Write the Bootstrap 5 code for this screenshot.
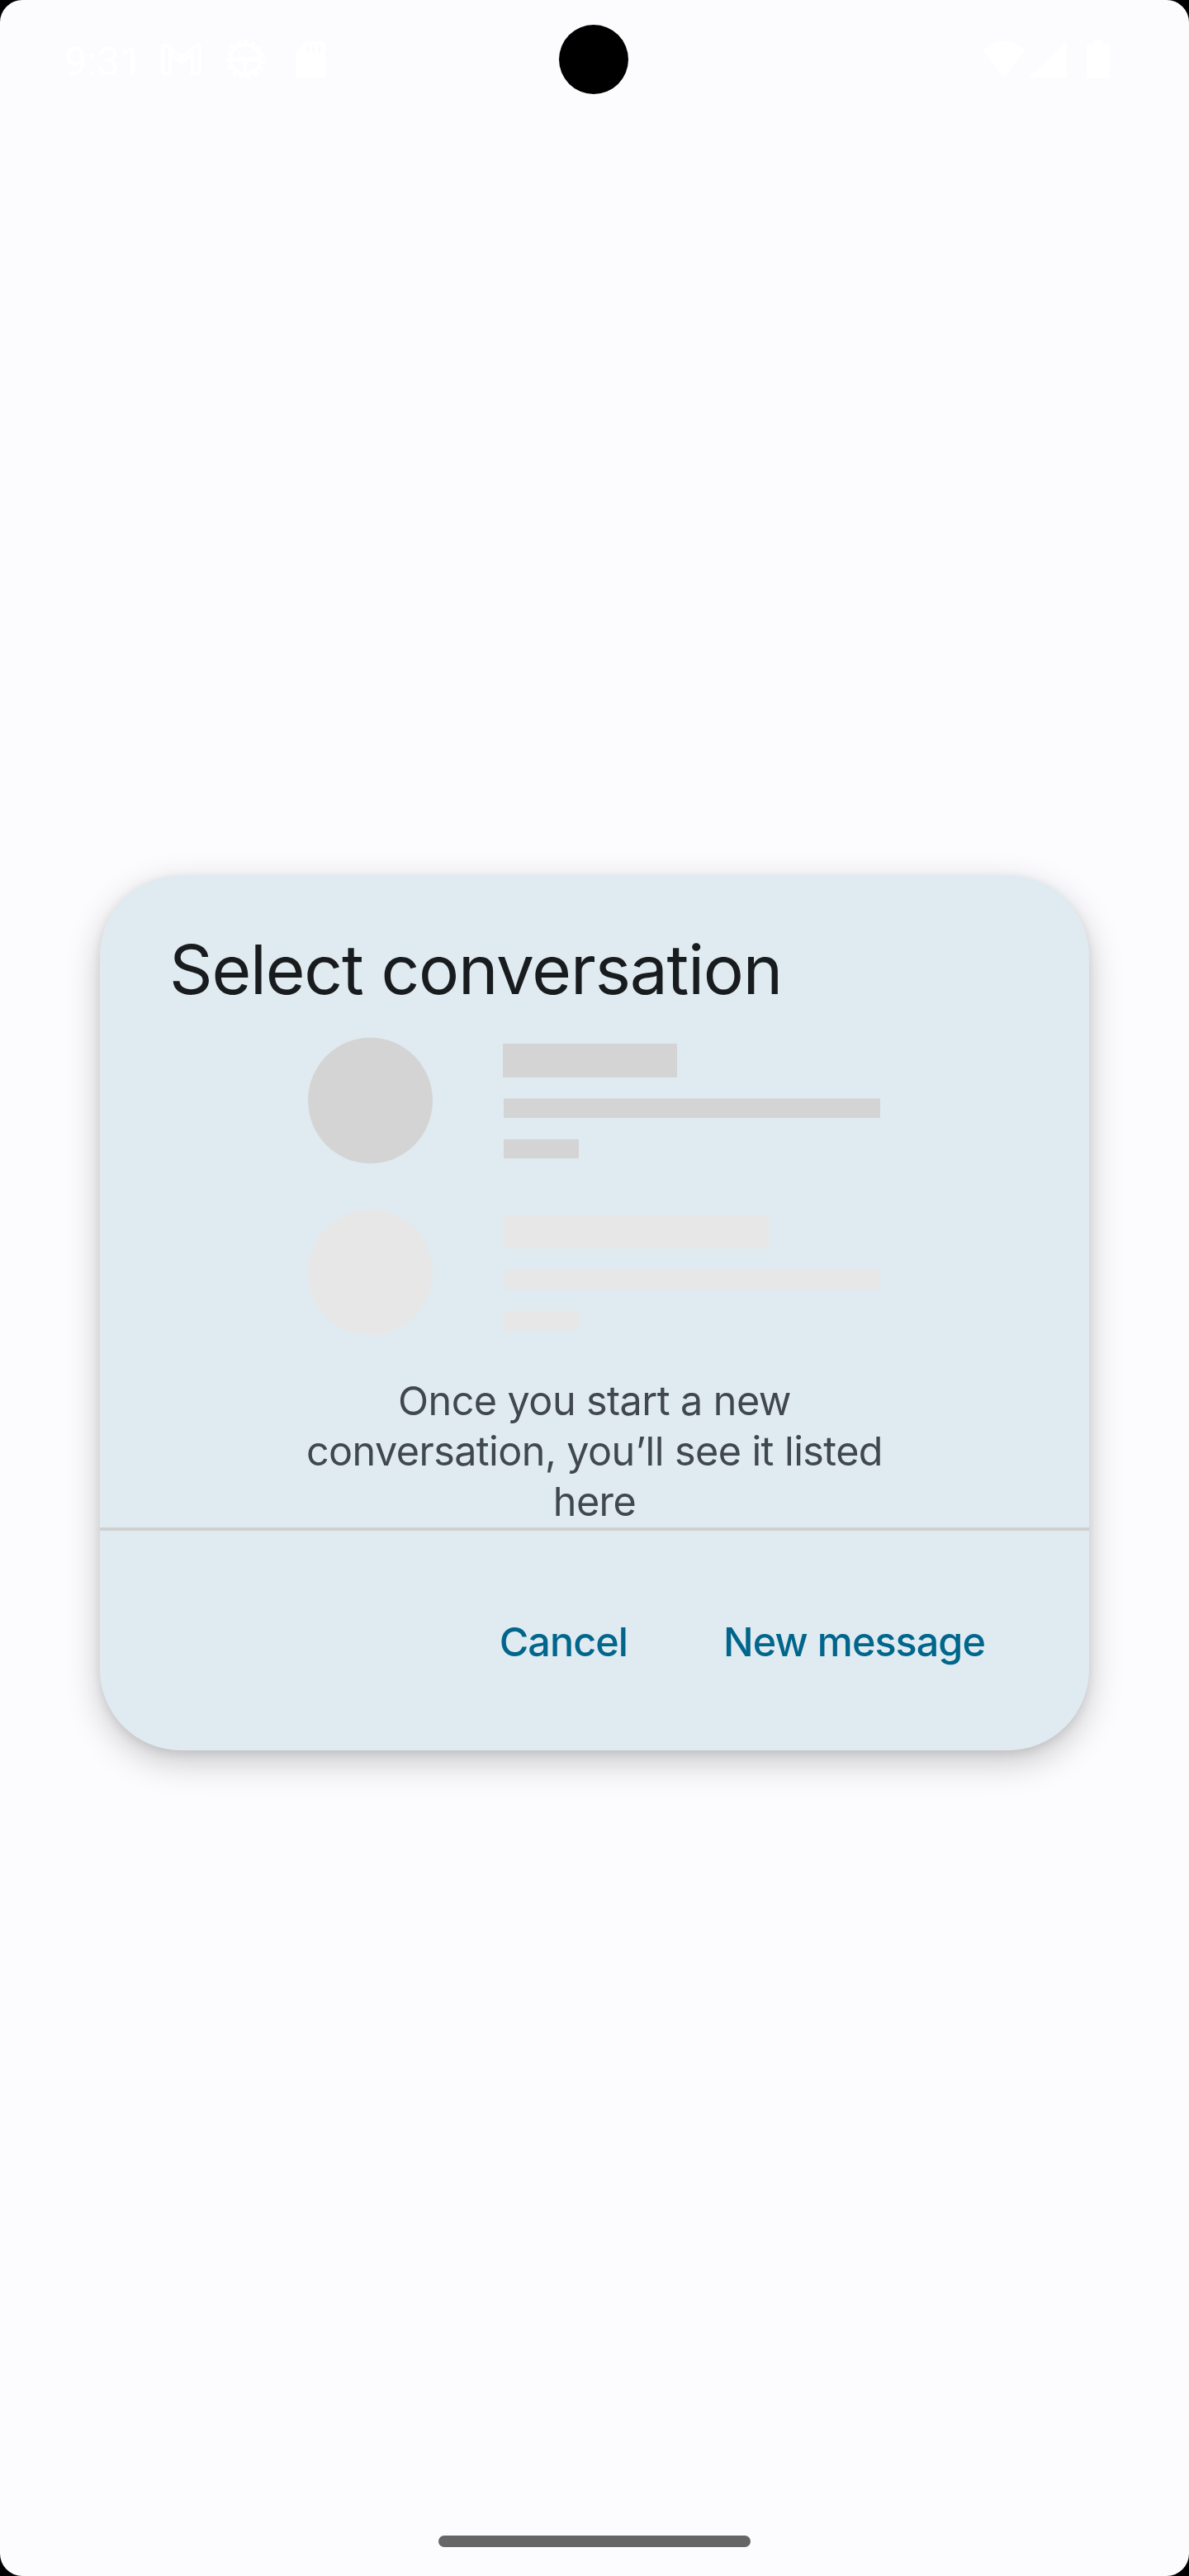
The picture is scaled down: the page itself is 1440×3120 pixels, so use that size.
<!DOCTYPE html>
<html lang="en">
<head>
<meta charset="utf-8">
<meta name="viewport" content="width=device-width, initial-scale=1">
<title>Select conversation</title>
<link rel="stylesheet" href="https://cdn.jsdelivr.net/npm/bootstrap@5.3.0/dist/css/bootstrap.min.css">
<style>
  body { background: #000; font-family: Inter, "Liberation Sans", sans-serif; }
  .screen { width: 1440px; height: 3120px; background: #fcfcff; border-radius: 27px; }
  .status-bar { height: 144px; padding: 0 96px 0 78px; color: #fff; }
  .status-bar svg { display: block; fill: currentColor; }
  .clock { font: 400 49px/58px Roboto, sans-serif; width: 117px; padding-top: 6px; }
  .camera { width: 84px; height: 84px; top: 30px; left: 677px; }
  .dialog-card { width: 1198px; height: 1060px; border-radius: 98px; background: #e0ebf1;
    box-shadow: 0 14px 42px rgba(0,0,0,.21), 0 4px 12px rgba(0,0,0,.09); }
  .dialog-title { font-size: 82px; line-height: 100px; font-weight: 400; letter-spacing: -1.2px; color: #191c1e; padding: 65px 84px 0 84px; }
  .empty-art { display: block; width: 700px; height: 364px; margin-top: 29px; }
  .empty-text { width: 720px; font-size: 48.5px; line-height: 61px; letter-spacing: -.57px; color: #40484d; margin-top: 48px; }
  .dialog-actions { border-top: 4px solid #d0d0d0; height: 270px; padding: 4px 84px 0 0; gap: 32px; }
  .text-action { font-size: 48.5px; line-height: 60px; letter-spacing: -.95px; font-weight: 500; color: #00668b; padding: 8px 42px; border: 0; }
  .gesture { height: 84px; padding-top: 35px; }
  .gesture-pill { width: 378px; height: 14px; background: #666; }
</style>
</head>
<body>
<div class="screen d-flex flex-column position-relative overflow-hidden mx-auto">
  <header class="status-bar d-flex align-items-center flex-shrink-0">
    <span class="clock">9:31</span>
    <svg width="49" height="38" viewBox="0 0 49 38"><path fill-rule="evenodd" d="M0 5C0 0 5-1 8 1L24.500 14 41 1C44-1 49 0 49 5V34Q49 38 45 38H36V16L24.500 25 13 16V38H4Q0 38 0 34ZM4 5V34H9V8L24.500 20 40 8V34H45V5Q44 3 42 5L24.500 18 7 5Q5 3 4 5Z"/></svg>
    <svg class="ms-4 me-4" width="58" height="52" viewBox="-29 -26 58 52"><circle r="18" fill="none" stroke="#fff" stroke-width="5"/><circle r="21.500" fill="none" stroke="#fff" stroke-width="5" stroke-dasharray="5 4.006"/><path d="M-17-2.500H17V2.500H2V17H-2V2.500H-17Z"/><circle cx="-7" cy="-8" r="1.500"/><circle cx="7" cy="-8" r="1.500"/></svg>
    <svg class="ms-2" width="36" height="44" viewBox="0 0 36 44"><path fill-rule="evenodd" d="M13 0H32Q36 0 36 4V40Q36 44 32 44H4Q0 44 0 40V13ZM13 5V14H17V5ZM20 5V14H24V5ZM27 5V14H31V5Z"/></svg>
    <div class="d-flex align-items-center ms-auto">
      <svg width="52" height="44" viewBox="0 0 52 44"><path d="M0 11Q26-11 52 11L26 44Z"/></svg>
      <svg class="ms-1" width="46" height="44" viewBox="0 0 46 44"><path d="M46 0V44H0Z"/></svg>
      <svg class="ms-4" width="28" height="46" viewBox="0 0 28 46"><path d="M8 0H20V5H25Q28 5 28 8V43Q28 46 25 46H3Q0 46 0 43V8Q0 5 3 5H8Z"/></svg>
    </div>
  </header>
  <div class="camera position-absolute rounded-circle bg-black"></div>

  <main class="flex-grow-1 d-flex align-items-center justify-content-center">
    <section class="dialog-card d-flex flex-column" role="dialog" aria-labelledby="dialogTitle">
      <h1 class="dialog-title m-0 text-nowrap" id="dialogTitle">Select conversation</h1>
      <div class="d-flex flex-column align-items-center flex-grow-1">
        <svg class="empty-art" viewBox="370 1254 700 364" aria-hidden="true">
          <g fill="#d4d4d4">
            <ellipse cx="448.500" cy="1333" rx="75.500" ry="76.200"/>
            <path d="M609 1264H820V1305H609ZM610 1330.500H1066V1354H610ZM610 1380H701V1403H610Z"/>
          </g>
          <g fill="#e7e7e7">
            <ellipse cx="448.500" cy="1541" rx="75.500" ry="76.200"/>
            <path d="M609.500 1472H931.500V1512.300H609.500ZM610 1538H1066V1562H610ZM610 1587.300H701V1611.300H610Z"/>
          </g>
        </svg>
        <p class="empty-text text-center mb-0">Once you start a new<br>conversation, you’ll see it listed<br>here</p>
      </div>
      <footer class="dialog-actions d-flex align-items-center justify-content-end">
        <button type="button" class="btn text-action text-nowrap">Cancel</button>
        <button type="button" class="btn text-action text-nowrap">New message</button>
      </footer>
    </section>
  </main>

  <div class="gesture d-flex justify-content-center flex-shrink-0"><div class="gesture-pill rounded-pill"></div></div>
</div>
<script src="https://cdn.jsdelivr.net/npm/bootstrap@5.3.0/dist/js/bootstrap.bundle.min.js"></script>
</body>
</html>
